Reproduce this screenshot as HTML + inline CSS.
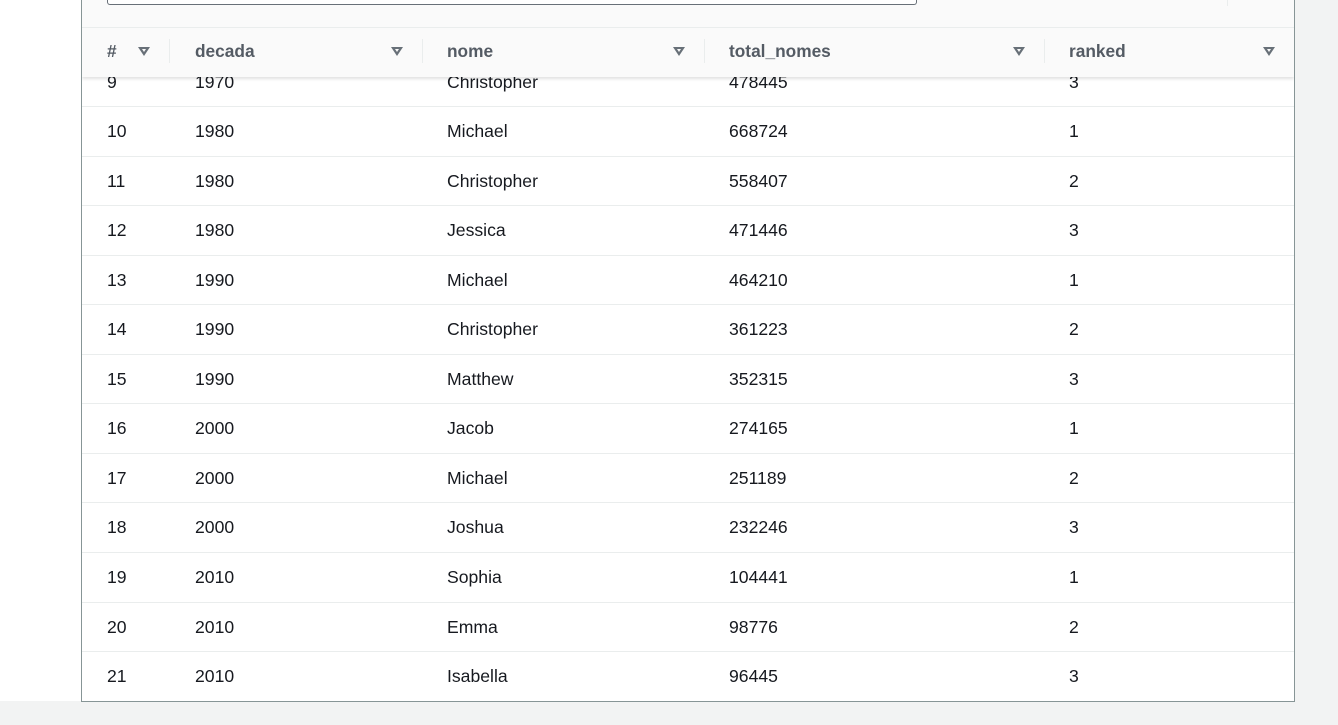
<!DOCTYPE html>
<html><head><style>
body{margin:0;width:1338px;height:725px;position:relative;overflow:hidden;background:#fff;font-family:"Liberation Sans",sans-serif;}
.bg{position:absolute;background:#f2f3f3}
.panel{position:absolute;left:81px;top:-2px;width:1212px;height:702px;border:1px solid #879596;background:#fff;overflow:hidden}
.c{position:absolute;font-size:17.6px;color:#16191f;line-height:20px}
.h{position:absolute;font-size:17.3px;color:#545b64;font-weight:bold;line-height:20px}
.line{position:absolute;left:0;width:1212px;height:1px;background:#eaeded}
.tri{position:absolute;width:0;height:0;border-left:6px solid transparent;border-right:6px solid transparent;border-top:9px solid #687078}
.tri:after{content:"";position:absolute;left:-2px;top:-7px;border-left:2px solid transparent;border-right:2px solid transparent;border-top:3px solid #fafafa}
.div{position:absolute;top:40px;width:1px;height:24px;background:#eaeded}
</style></head><body>
<div class="bg" style="left:0;top:701px;width:1338px;height:24px"></div>
<div class="bg" style="left:1295px;top:0;width:43px;height:725px"></div>
<div class="panel">
<div id="rows"></div>
<div style="position:absolute;left:0;top:0;width:1212px;height:78px;background:#fafafa;box-shadow:0 2px 3px rgba(0,0,0,.12)">
<div style="position:absolute;left:25px;top:-2px;width:808px;height:7px;border:1px solid #687078;border-top:none;border-radius:0 0 3px 3px;background:#fff"></div>
<div style="position:absolute;left:1145px;top:0;width:1px;height:7px;background:#eaeded"></div>
<div style="position:absolute;left:0;top:28px;width:1212px;height:1px;background:#eaeded"></div>
<div class="h" style="left:25px;top:42px">#</div>
<div class="h" style="left:113px;top:42px">decada</div>
<div class="h" style="left:365px;top:42px">nome</div>
<div class="h" style="left:647px;top:42px">total_nomes</div>
<div class="h" style="left:987px;top:42px">ranked</div>
<div class="tri" style="left:56px;top:48px"></div>
<div class="tri" style="left:309px;top:48px"></div>
<div class="tri" style="left:591px;top:48px"></div>
<div class="tri" style="left:931px;top:48px"></div>
<div class="tri" style="left:1181px;top:48px"></div>
<div class="div" style="left:87px"></div>
<div class="div" style="left:340px"></div>
<div class="div" style="left:622px"></div>
<div class="div" style="left:962px"></div>
</div>
</div>
<script>
var d=[[9,1970,"Christopher",478445,3],[10,1980,"Michael",668724,1],[11,1980,"Christopher",558407,2],[12,1980,"Jessica",471446,3],[13,1990,"Michael",464210,1],[14,1990,"Christopher",361223,2],[15,1990,"Matthew",352315,3],[16,2000,"Jacob",274165,1],[17,2000,"Michael",251189,2],[18,2000,"Joshua",232246,3],[19,2010,"Sophia",104441,1],[20,2010,"Emma",98776,2],[21,2010,"Isabella",96445,3]];
var h="",xs=[25,113,365,647,987];
d.forEach(function(r,i){var cy=(i==0?83:132+(i-1)*49.55);
 r.forEach(function(v,j){h+='<div class="c" style="left:'+xs[j]+'px;top:'+(cy-10)+'px">'+v+'</div>';});
 if(i<12)h+='<div class="line" style="top:'+Math.round(107+i*49.55)+'px"></div>';});
document.getElementById("rows").innerHTML=h;
</script>
</body></html>
